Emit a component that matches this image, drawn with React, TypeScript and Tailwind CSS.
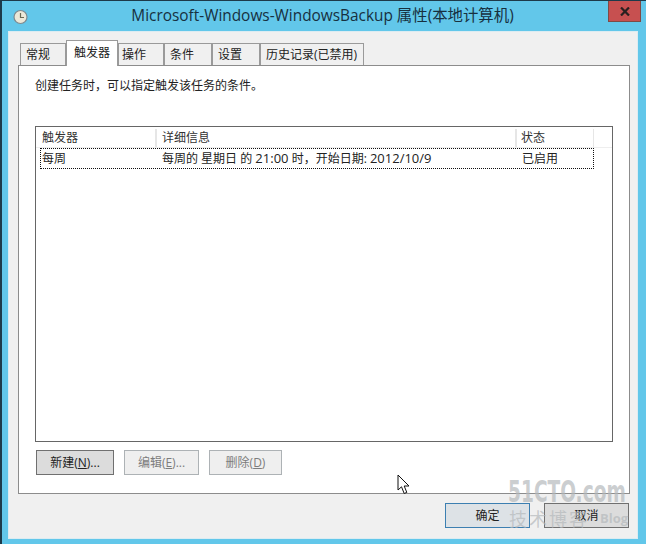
const cjk = { fontFamily: '"Open Sans", "Noto Sans CJK SC", sans-serif' };

function Tab({ label, w, pl, active }: { label: string; w: string; pl: string; active?: boolean }) {
  if (active) {
    return (
      <div className={`${w} ${pl} h-[26px] -mb-px relative z-10 bg-white border border-b-0 border-[#9a9a9a] flex items-center pb-[1px] text-[12px] text-[#222]`}>
        {label}
      </div>
    );
  }
  return (
    <div className={`${w} ${pl} h-[22px] bg-[#f0f0f0] border border-b-0 border-[#9a9a9a] flex items-center text-[12px] text-[#222] whitespace-nowrap`}>
      {label}
    </div>
  );
}

function Btn({ w, disabled, children }: { w: string; disabled?: boolean; children: React.ReactNode }) {
  return (
    <div
      className={`${w} h-[25px] border flex items-center justify-center text-[12px] ${
        disabled ? 'border-[#adb2b5] bg-[#efefef] text-[#7d7d7d]' : 'border-[#707070] bg-[#dcdcdc] text-[#222]'
      }`}
    >
      {children}
    </div>
  );
}

export default function App() {
  return (
    <div style={cjk} className="relative w-[646px] h-[544px] overflow-hidden bg-[#62c7ea] border-l-2 border-t border-[#1d3a4a] flex flex-col">
      {/* title bar */}
      <div className="h-[30px] shrink-0 relative flex items-center justify-center">
        <svg className="absolute left-[11px] top-[8px]" width="16" height="16" viewBox="0 0 16 16">
          <circle cx="7.5" cy="8" r="6.5" fill="#ece8d8" stroke="#7d8a90" strokeWidth="1.2" />
          <path d="M7.5 4 V8.5 H11" fill="none" stroke="#6b6a55" strokeWidth="1.2" />
        </svg>
        <span className="text-[15.4px] text-[#17303f] ml-[-3px] mt-[-1px] whitespace-nowrap">Microsoft-Windows-WindowsBackup 属性(本地计算机)</span>
        <div className="absolute right-[5px] -top-px w-[33px] h-[22px] bg-[#c75050] border border-[#7f4a45] flex items-center justify-center">
          <svg width="10" height="9" viewBox="0 0 10 9">
            <path d="M1 0.5 L9 8.5 M9 0.5 L1 8.5" stroke="#2a2020" strokeWidth="2.2" />
          </svg>
        </div>
      </div>
      {/* client */}
      <div className="ml-[6px] mr-[8px] h-[508px] bg-[#f0f0f0] border border-[#dcecf2] px-[9px] pt-[8px] flex flex-col">
        {/* tabs */}
        <div className="h-[25px] flex items-end pl-[2px] shrink-0">
          <Tab label="常规" w="w-[46px]" pl="pl-[5px]" />
          <Tab label="触发器" w="w-[52px]" pl="pl-[7px]" active />
          <Tab label="操作" w="w-[46px]" pl="pl-[3px]" />
          <Tab label="条件" w="w-[48px]" pl="pl-[5px]" />
          <Tab label="设置" w="w-[48px]" pl="pl-[5px]" />
          <Tab label="历史记录(已禁用)" w="w-[104px]" pl="pl-[5px]" />
        </div>
        {/* panel */}
        <div className="w-[612px] h-[429px] bg-white border border-[#8c8c8c] pt-[12px] pl-[16px] flex flex-col">
          <p className="text-[12px] leading-[16px] text-[#222]">创建任务时，可以指定触发该任务的条件。</p>
          <div className="mt-[32px] w-[578px] h-[316px] border border-[#666] flex flex-col">
            <div className="h-[21px] pt-[2px] flex items-stretch text-[12px] text-[#333] border-b border-[#eeeeee] shrink-0">
              <div className="w-[121px] border-r-2 border-[#e6e6e6] pl-[6px] flex items-center">触发器</div>
              <div className="w-[360px] border-r-2 border-[#e6e6e6] pl-[5px] flex items-center">详细信息</div>
              <div className="w-[77px] border-r border-[#e6e6e6] pl-[4px] flex items-center">状态</div>
            </div>
            <div className="ml-[4px] w-[554px] h-[21px] border border-dotted border-[#111] flex items-center text-[12px] text-[#222]">
              <div className="w-[117px] pl-[1px]">每周</div>
              <div className="w-[360px] pl-[4px] whitespace-nowrap">每周的 星期日 的 <span className="text-[13px]">21:00</span> 时，开始日期: <span className="text-[13px]">2012/10/9</span></div>
              <div className="pl-[4px]">已启用</div>
            </div>
          </div>
          <div className="mt-[8px] ml-[1px] flex gap-[10px]">
            <Btn w="w-[78px]">
              <span>新建(<span className="underline">N</span>)...</span>
            </Btn>
            <Btn w="w-[75px]" disabled>
              <span>编辑(<span className="underline">E</span>)...</span>
            </Btn>
            <Btn w="w-[73px]" disabled>
              <span>删除(<span className="underline">D</span>)</span>
            </Btn>
          </div>
        </div>
        {/* footer */}
        <div className="mt-[9px] -mr-[1px] flex justify-end gap-[14px]">
          <div className="w-[85px] h-[25px] border border-[#3c7fb1] bg-[#dde2e6] flex items-center justify-center text-[12px] text-[#222]">确定</div>
          <div className="w-[85px] h-[25px] border border-[#707070] bg-[#dcdcdc] flex items-center justify-center text-[12px] text-[#222]">取消</div>
        </div>
      </div>
      {/* cursor */}
      <svg className="absolute left-[395px] top-[473px]" width="14" height="22" viewBox="0 0 14 22">
        <path d="M1 1 V16 L4.5 12.8 L7.2 19.5 L9.8 18.4 L7.2 12 H12 Z" fill="#fff" stroke="#111" strokeWidth="1" />
      </svg>
      {/* watermark */}
      <div className="absolute left-[506px] top-[472px] text-[31px] leading-[36px] font-bold text-[#b4b8bb]/70 whitespace-nowrap origin-left scale-x-[0.6]" style={{ fontFamily: '"DejaVu Sans", sans-serif' }}>
        51CTO.com
      </div>
      <div className="absolute left-[507px] top-[506px] text-[18px] leading-[24px] text-[#b4b8bb]/70 tracking-[2px] whitespace-nowrap">技术博客</div>
      <div className="absolute left-[598px] top-[509px] text-[13px] leading-[16px] font-bold text-[#b4b8bb]/70 whitespace-nowrap">Blog</div>
    </div>
  );
}
